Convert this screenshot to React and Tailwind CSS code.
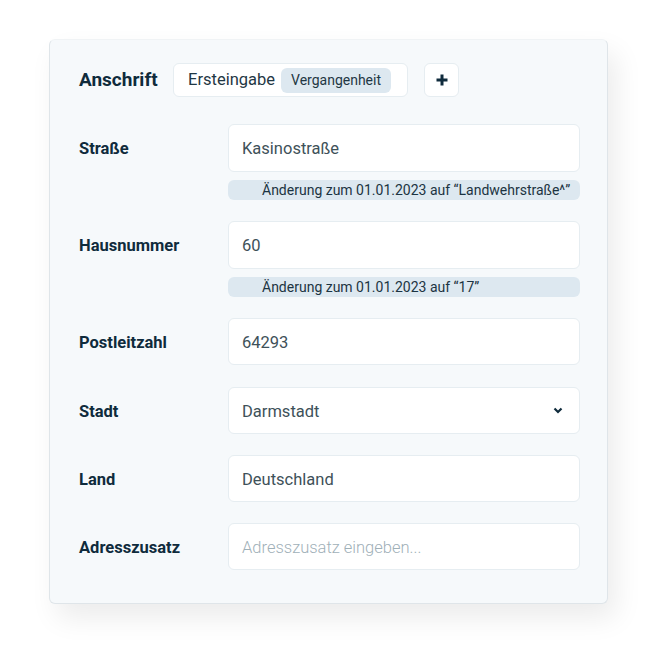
const font = { fontFamily: "Roboto, 'Noto Sans', sans-serif" };

function Notice({ children }) {
  return (
    <div className="mt-2 h-5 rounded-md bg-[#dde8f0] pl-[34px] text-[14px] leading-5 text-[#1c3442]">
      {children}
    </div>
  );
}

function Row({ label, children, className = "" }) {
  return (
    <div className={"flex items-start " + className}>
      <div className="w-[149px] shrink-0 pt-[13px] text-[16.5px] font-bold leading-6 text-[#0f2b3c]">
        {label}
      </div>
      <div className="flex-1">{children}</div>
    </div>
  );
}

function Field({ value, placeholder, select, tall }) {
  return (
    <div
      className={
        (tall ? "h-12" : "h-[47px]") +
        " flex items-center justify-between rounded-md border border-[#e6edf1] bg-white pl-[13px] pr-4 pt-[3px] text-[16.5px]"
      }
    >
      {value ? (
        <span className="text-[#3e5159]">{value}</span>
      ) : (
        <span className="font-light text-[#9fb0b8]">{placeholder}</span>
      )}
      {select && (
        <svg width="10" height="7" viewBox="0 0 10 7" className="-mt-[3px] text-[#0f2b3c]">
          <path d="M1.5 1.5 L5 5 L8.5 1.5" fill="none" stroke="currentColor" strokeWidth="2.2" />
        </svg>
      )}
    </div>
  );
}

export default function App() {
  return (
    <div className="h-[650px] w-[650px] bg-white pl-[49px] pt-[39px]" style={font}>
      <div className="w-[559px] rounded-md border border-[#dfe5e9] border-t-[#f0f3f5] bg-[#f6f9fb] pb-[33px] pl-[29px] pr-[27px] pt-[23px] shadow-[8px_14px_28px_rgba(0,0,0,0.08)]">
        <div className="flex items-center">
          <h2 className="w-[94px] text-[19px] font-bold text-[#0f2b3c]">Anschrift</h2>
          <div className="flex h-[34px] w-[235px] items-center rounded-md border border-[#e6edf1] bg-white pl-[14px]">
            <span className="text-[16.5px] text-[#1f3744]">Ersteingabe</span>
            <span className="ml-[6px] rounded-md bg-[#dde8f0] px-[10px] py-[2px] text-[14px] text-[#1f3744]">
              Vergangenheit
            </span>
          </div>
          <button className="ml-4 flex h-[34px] w-[35px] items-center justify-center rounded-md border border-[#e6edf1] bg-white">
            <svg width="14" height="14" viewBox="0 0 14 14">
              <path d="M7 1.5 V12.5 M1.5 7 H12.5" stroke="#0f2b3c" strokeWidth="3" />
            </svg>
          </button>
        </div>

        <div className="mt-[27px] flex flex-col gap-[21px]">
          <Row label="Straße">
            <Field value="Kasinostraße" tall />
            <Notice>Änderung zum 01.01.2023 auf “Landwehrstraße^”</Notice>
          </Row>
          <Row label="Hausnummer">
            <Field value="60" tall />
            <Notice>Änderung zum 01.01.2023 auf “17”</Notice>
          </Row>
          <Row label="Postleitzahl">
            <Field value="64293" />
          </Row>
          <Row label="Stadt" className="mt-px">
            <Field value="Darmstadt" select />
          </Row>
          <Row label="Land">
            <Field value="Deutschland" />
          </Row>
          <Row label="Adresszusatz">
            <Field placeholder="Adresszusatz eingeben..." />
          </Row>
        </div>
      </div>
    </div>
  );
}
